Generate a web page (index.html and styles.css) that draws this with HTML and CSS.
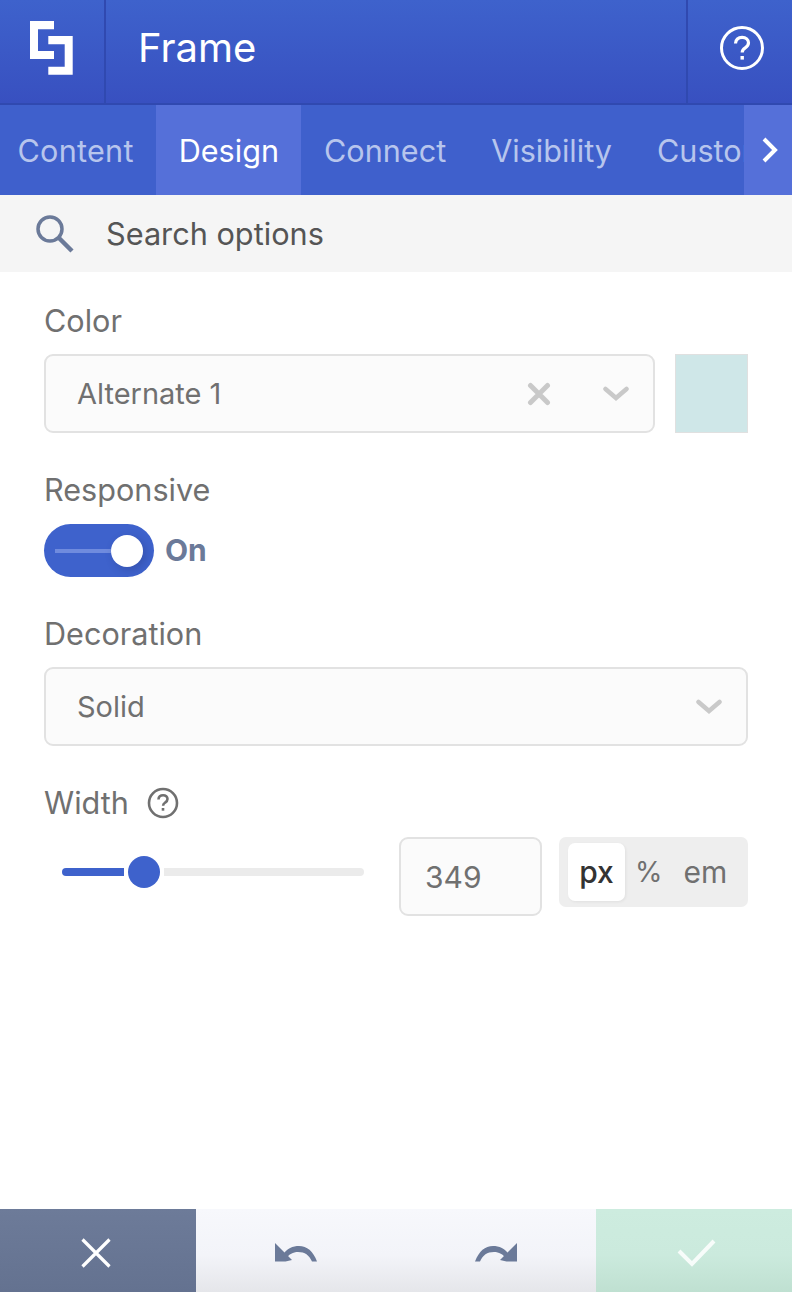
FILE: index.html
```html
<!DOCTYPE html>
<html lang="en">
<head>
  <meta charset="UTF-8">
  <meta name="viewport" content="width=device-width, initial-scale=1.0">
  <title>Frame</title>
  <link rel="stylesheet" href="styles.css">
</head>
<body>
  <header class="topbar">
    <div class="logo">
      <svg width="43" height="54" viewBox="0 0 43 54" fill="#fff"><path d="M0 0H24V8.300H8V30H24V38H0Z"/><path d="M18.300 15H42.700V53.700H18.300V45.700H34.700V23.300H18.300Z"/></svg>
    </div>
    <div class="title">Frame</div>
    <div class="help">
      <svg width="44" height="44" viewBox="0 0 44 44" fill="none" stroke="#fff"><circle cx="22" cy="22" r="20.5" stroke-width="3"/><path d="M15.5 17.5c0-3.800 2.800-6.200 6.600-6.200s6.400 2.300 6.400 5.500c0 2.500-1.300 3.800-3.300 5-1.900 1.200-3 2.300-3 4.700" stroke-width="3.200"/><path d="M20.500 30h3.400v3.600h-3.400z" fill="#fff" stroke="none"/></svg>
    </div>
  </header>

  <nav class="tabs">
    <div class="tab-strip">
      <button class="tab">Content</button>
      <button class="tab active">Design</button>
      <button class="tab">Connect</button>
      <button class="tab">Visibility</button>
      <button class="tab">Custom</button>
    </div>
    <button class="tab-next">
      <svg width="18" height="26" viewBox="0 0 18 26" fill="none"><path d="M3 2l11 11L3 24" stroke="#fff" stroke-width="4"/></svg>
    </button>
  </nav>

  <div class="search">
    <svg width="40" height="40" viewBox="0 0 40 40" fill="none" stroke="#6b7a99"><circle cx="15" cy="15" r="12" stroke-width="3.500"/><path d="M24 24l13 13" stroke-width="4.500"/></svg>
    <span>Search options</span>
  </div>

  <main class="options">
    <section class="field field-color">
      <label class="label">Color</label>
      <div class="row">
        <div class="select grow">
          <span class="select-value">Alternate 1</span>
          <svg class="clear" width="24" height="24" viewBox="0 0 24 24" fill="none"><path d="M3.500 3.500l17 17M20.500 3.500l-17 17" stroke="#c9c9c9" stroke-width="5" stroke-linecap="round"/></svg>
          <svg class="chevron" width="26" height="16" viewBox="0 0 26 16" fill="none"><path d="M2.500 3L13 12l10.500-9" stroke="#c9c9c9" stroke-width="4.500" stroke-linecap="round"/></svg>
        </div>
        <div class="swatch"></div>
      </div>
    </section>

    <section class="field field-toggle">
      <label class="label">Responsive</label>
      <div class="toggle-row">
        <div class="toggle"><span class="toggle-line"></span><span class="toggle-knob"></span></div>
        <span class="toggle-text">On</span>
      </div>
    </section>

    <section class="field field-deco">
      <label class="label">Decoration</label>
      <div class="select">
        <span class="select-value">Solid</span>
        <svg class="chevron" width="26" height="16" viewBox="0 0 26 16" fill="none"><path d="M2.500 3L13 12l10.500-9" stroke="#c9c9c9" stroke-width="4.500" stroke-linecap="round"/></svg>
      </div>
    </section>

    <section class="field field-width">
      <div class="label-row">
        <label class="label">Width</label>
        <svg width="32" height="32" viewBox="0 0 32 32" fill="none" stroke="#707070"><circle cx="16" cy="16" r="14" stroke-width="2.600"/><path d="M11.500 12.500c0-2.700 2-4.300 4.600-4.300s4.400 1.600 4.400 3.800c0 1.800-.9 2.700-2.300 3.500-1.300.8-2.100 1.600-2.100 3.200" stroke-width="2.600"/><path d="M14.700 21h2.600v2.700h-2.600z" fill="#707070" stroke="none"/></svg>
      </div>
      <div class="width-row">
        <div class="slider">
          <span class="slider-fill"></span>
          <span class="slider-knob"></span>
          <span class="slider-rest"></span>
        </div>
        <div class="number">349</div>
        <div class="units">
          <span class="unit active">px</span>
          <span class="unit unit-pct">%</span>
          <span class="unit unit-em">em</span>
        </div>
      </div>
    </section>
  </main>

  <footer class="actions">
    <button class="action cancel">
      <svg width="30" height="30" viewBox="0 0 30 30" fill="none"><path d="M1.500 1.500l27 27M28.500 1.500l-27 27" stroke="#fff" stroke-width="3.200"/></svg>
    </button>
    <div class="history">
      <button class="action">
        <svg width="44" height="20" viewBox="0 0 44 20" fill="#6b7a99"><path d="M1 0l17 17-6.500 1.500H1z"/><path d="M8 13C13 5 19 3 25 3c8 0 14 5 18 15.500h-5c-3-6.500-7-9.500-14-9.500-5 0-9 2-12 7z"/></svg>
      </button>
      <button class="action">
        <svg width="44" height="20" viewBox="0 0 44 20" fill="#6b7a99"><path d="M43 0L26 17l6.500 1.500H43z"/><path d="M36 13C31 5 25 3 19 3 11 3 5 8 1 18.500h5C9 12 13 9 20 9c5 0 9 2 12 7z"/></svg>
      </button>
    </div>
    <button class="action confirm">
      <svg width="40" height="30" viewBox="0 0 40 30" fill="none"><path d="M2 13l13 13L37 3" stroke="#fff" stroke-opacity=".85" stroke-width="4"/></svg>
    </button>
  </footer>
</body>
</html>
```

FILE: styles.css
```css
* {
  box-sizing: border-box;
}
body {
  font-family: Inter, "Noto Sans", sans-serif;
  margin: 0;
  height: 1292px;
  display: flex;
  flex-direction: column;
  background-color: #fff;
  color: #707070;
  overflow: hidden;
}
button {
  font-family: inherit;
  border: none;
  background: none;
  padding: 0;
}

/* top bar */
.topbar {
  height: 105px;
  flex-shrink: 0;
  display: flex;
  color: #fff;
  background: linear-gradient(#3e62cc, #3850c0);
  border-bottom: 2px solid #3049b0;
}
.logo {
  width: 106px;
  display: flex;
  align-items: center;
  justify-content: center;
  border-right: 2px solid #3049b0;
  padding-right: 1px;
  padding-bottom: 7px;
}
.title {
  flex: 1;
  padding-left: 32px;
  font-size: 40px;
  line-height: 95px;
}
.help {
  width: 106px;
  display: flex;
  align-items: center;
  justify-content: center;
  border-left: 2px solid #3049b0;
  padding-left: 3px;
  padding-bottom: 8px;
}

/* tabs */
.tabs {
  height: 90px;
  flex-shrink: 0;
  display: flex;
  background-color: #3f60cc;
}
.tab-strip {
  flex: 1;
  min-width: 0;
  display: flex;
  overflow: hidden;
  margin-left: -5px;
}
.tab {
  flex-shrink: 0;
  padding: 1px 22.500px 0;
  font-size: 30.600px;
  color: #b7c5ed;
}
.tab:first-child {
  letter-spacing: 0.25px;
}
.tab.active {
  color: #fff;
  background-color: #5570d9;
}
.tab-next {
  width: 48px;
  flex-shrink: 0;
  display: flex;
  align-items: center;
  justify-content: center;
  background-color: #5570d9;
  padding-left: 4px;
}

/* search */
.search {
  height: 77px;
  flex-shrink: 0;
  display: flex;
  align-items: center;
  gap: 31px;
  padding-left: 35px;
  background-color: #f5f5f5;
  color: #555;
  font-size: 30.700px;
}

/* options */
.options {
  flex: 1;
  padding: 0 44px;
}
.label {
  display: block;
  font-size: 30.600px;
  line-height: 36px;
}
.field-color {
  padding-top: 31px;
}
.field-toggle,
.field-deco,
.field-width {
  padding-top: 39px;
}
.row {
  display: flex;
  gap: 20px;
  margin-top: 15px;
}
.grow {
  flex: 1;
}
.select {
  height: 79px;
  display: flex;
  align-items: center;
  padding: 0 24px 0 31px;
  background-color: #fbfbfb;
  border: 2px solid #e2e2e2;
  border-radius: 9px;
  font-size: 29px;
}
.select-value {
  flex: 1;
}
.clear {
  margin-right: 52px;
}
.field-deco .select {
  margin-top: 15px;
}
.swatch {
  width: 73px;
  height: 79px;
  background-color: #cfe7e8;
  border: 1px solid #e0e0e0;
}

/* toggle */
.toggle-row {
  display: flex;
  align-items: center;
  gap: 11px;
  margin-top: 16px;
}
.toggle {
  width: 110px;
  height: 53px;
  display: flex;
  align-items: center;
  padding: 0 11px;
  border-radius: 27px;
  background-color: #3e62cc;
}
.toggle-line {
  flex: 1;
  height: 4px;
  background-color: #6f8bde;
}
.toggle-knob {
  width: 32px;
  height: 32px;
  border-radius: 50%;
  background-color: #fff;
  box-shadow: 3px 3px 8px rgba(30, 40, 90, 0.25);
}
.toggle-text {
  padding-bottom: 2px;
  font-size: 30px;
  font-weight: 700;
  color: #6b7a99;
}

/* width */
.label-row {
  display: flex;
  align-items: center;
  gap: 18px;
}
.width-row {
  display: flex;
  align-items: flex-start;
  margin-top: 16px;
}
.slider {
  width: 302px;
  height: 8px;
  margin: 31px 35px 0 18px;
  display: flex;
  align-items: center;
}
.slider-fill {
  width: 62px;
  height: 8px;
  border-radius: 4px 0 0 4px;
  background-color: #3e62cc;
}
.slider-knob {
  width: 32px;
  height: 32px;
  flex-shrink: 0;
  border-radius: 50%;
  background-color: #3e62cc;
  margin: 0 4px;
}
.slider-rest {
  flex: 1;
  height: 8px;
  border-radius: 0 4px 4px 0;
  background-color: #ebebeb;
}
.number {
  width: 143px;
  height: 79px;
  padding-left: 24px;
  line-height: 77px;
  font-size: 30px;
  background-color: #fbfbfb;
  border: 2px solid #e2e2e2;
  border-radius: 9px;
}
.units {
  width: 189px;
  height: 70px;
  margin-left: 17px;
  display: flex;
  align-items: center;
  padding-left: 9px;
  border-radius: 7px;
  background-color: #eee;
  font-size: 30px;
}
.unit {
  line-height: 58px;
}
.unit.active {
  width: 57px;
  text-align: center;
  color: #333;
  font-weight: 500;
  background-color: #fff;
  border-radius: 7px;
  box-shadow: 1px 1px 3px rgba(0, 0, 0, 0.06);
}
.unit-pct {
  margin-left: 10px;
  font-size: 28px;
}
.unit-em {
  margin-left: 21px;
}

/* footer */
.actions {
  height: 83px;
  flex-shrink: 0;
  display: flex;
}
.action {
  display: flex;
  align-items: center;
  justify-content: center;
  padding-top: 5px;
}
.cancel {
  width: 196px;
  padding-right: 4px;
  background: linear-gradient(#6d7b99, #647290);
}
.history {
  flex: 1;
  display: flex;
  background: linear-gradient(#f7f8fc 0%, #f3f4f9 55%, #e5e6ea 100%);
}
.history .action {
  width: 200px;
}
.confirm {
  width: 196px;
  padding-left: 5px;
  background: linear-gradient(#cdecdf 0%, #cbeadd 55%, #bfe0d1 100%);
}
```
